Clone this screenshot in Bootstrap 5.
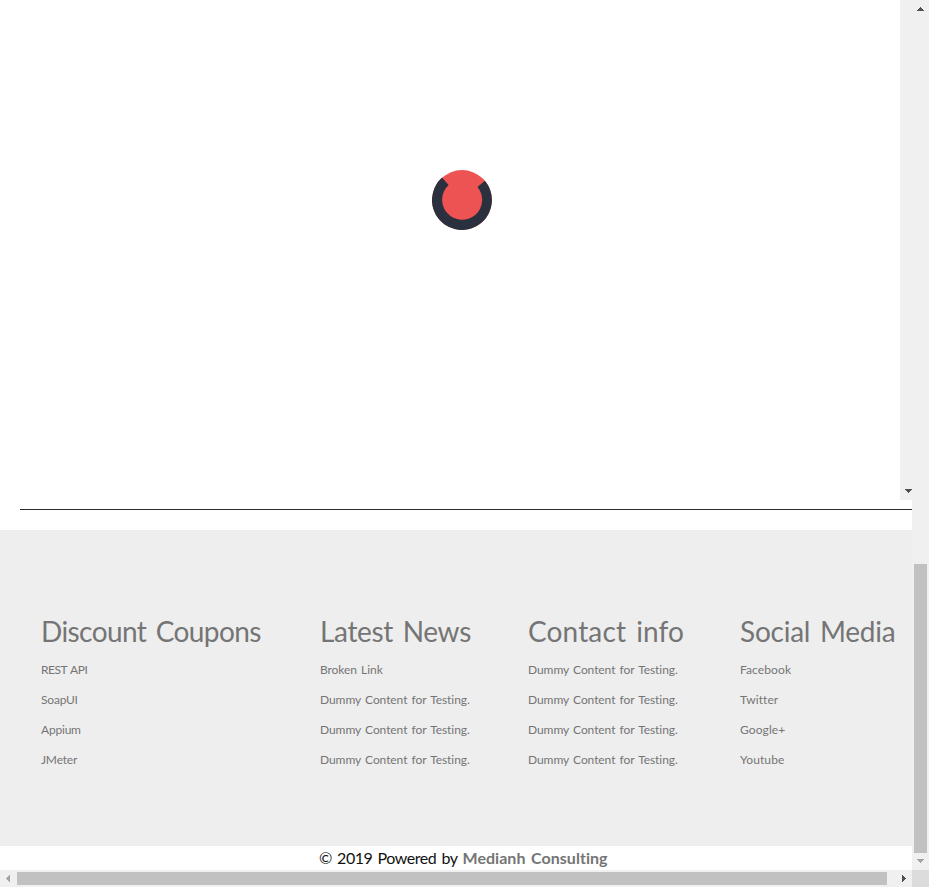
<!DOCTYPE html>
<html lang="en">
<head>
<meta charset="utf-8">
<title>Medianh Consulting</title>
<link href="https://cdn.jsdelivr.net/npm/bootstrap@5.3.0/dist/css/bootstrap.min.css" rel="stylesheet">
<style>
body{font-family:"Trebuchet MS",Lato,"Open Sans",sans-serif;width:929px;height:887px;color:#111;font-variant-ligatures:none;word-spacing:.1em}
.view{width:912px;height:870px}
.frame{height:500px}
.slide{padding:170px 0 0 432px}
.frame-bar{width:12px;background:#f0f0f0;padding:489px 0 0 5px}
.rule{margin:9px 0 0 20px;height:1px;background:#2b2e30}
.links{margin-top:20px;height:316px;background:#eee;padding:82px 0 0 41px;color:#757575}
.links h2{font-size:28px;line-height:38px;margin:0 0 5px;font-weight:400;white-space:nowrap;word-spacing:.1em}
.links li{font-size:12px;line-height:30px;white-space:nowrap;word-spacing:.1em;letter-spacing:-.07px}
.links a,.credit a{color:#757575}
.c1{width:279px}.c2{width:208px}.c3{width:212px}.c4{width:172px}
.c1 h2{letter-spacing:-.58px}.c2 h2{letter-spacing:-.33px}.c3 h2{letter-spacing:.14px}.c4 h2{letter-spacing:-.23px}
.c1 li{letter-spacing:-.2px}.c1 li:first-child{letter-spacing:-.5px}
.c4 li{letter-spacing:.1px}
.credit{height:24px;padding-left:319px;font-size:16px;line-height:23px;white-space:nowrap;word-spacing:.1em;letter-spacing:-.46px}
.credit a{letter-spacing:.04px}
.vbar{width:17px;background:#f0f0f0}
.vbar .thumb{width:13px;height:289px;margin:549px auto 0 2px;background:#c1c1c1}
.hbar{height:17px;background:#f0f0f0}
.hbar .thumb{width:870px;height:13px;background:#c1c1c1}
.corner{width:17px;height:17px;background:#dcdcdc}
svg{display:block;flex:none}
</style>
<script src="https://cdn.jsdelivr.net/npm/bootstrap@5.3.0/dist/js/bootstrap.bundle.min.js"></script>
</head>
<body class="overflow-hidden bg-white">
<div class="d-flex">
  <main class="view overflow-hidden">
    <div class="frame d-flex">
      <div class="slide flex-grow-1">
        <svg width="60" height="60" viewBox="0 0 60 60"><circle cx="30" cy="30" r="29.9" fill="#ed5353"/><path d="M10 7.6A30 30 0 1 0 52.9 10.7L45.5 17A20 20 0 1 1 16.6 15.1Z" fill="#2a303d"/></svg>
      </div>
      <div class="frame-bar"><svg width="7" height="4" shape-rendering="crispEdges"><path d="M0 0h7v1h-1v1h-1v1h-1v1h-1v-1h-1v-1h-1v-1h-1z" fill="#505050"/></svg></div>
    </div>
    <div class="rule"></div>
    <footer>
      <div class="links d-flex">
        <section class="c1"><h2>Discount Coupons</h2><ul class="list-unstyled mb-0"><li><a class="text-decoration-none" href="#">REST API</a></li><li><a class="text-decoration-none" href="#">SoapUI</a></li><li><a class="text-decoration-none" href="#">Appium</a></li><li><a class="text-decoration-none" href="#">JMeter</a></li></ul></section>
        <section class="c2"><h2>Latest News</h2><ul class="list-unstyled mb-0"><li><a class="text-decoration-none" href="#">Broken Link</a></li><li>Dummy Content for Testing.</li><li>Dummy Content for Testing.</li><li>Dummy Content for Testing.</li></ul></section>
        <section class="c3"><h2>Contact info</h2><ul class="list-unstyled mb-0"><li>Dummy Content for Testing.</li><li>Dummy Content for Testing.</li><li>Dummy Content for Testing.</li><li>Dummy Content for Testing.</li></ul></section>
        <section class="c4"><h2>Social Media</h2><ul class="list-unstyled mb-0"><li><a class="text-decoration-none" href="#">Facebook</a></li><li><a class="text-decoration-none" href="#">Twitter</a></li><li><a class="text-decoration-none" href="#">Google+</a></li><li><a class="text-decoration-none" href="#">Youtube</a></li></ul></section>
      </div>
      <div class="credit">© 2019 Powered by <a class="fw-bold text-decoration-none" href="#">Medianh Consulting</a></div>
    </footer>
  </main>
  <div class="vbar">
    <svg width="17" height="15" shape-rendering="crispEdges"><path d="M5 11v-1h1v-1h1v-1h1v-1h1v1h1v1h1v1h1v1z" fill="#505050"/></svg>
    <div class="thumb"></div>
    <svg width="17" height="17" shape-rendering="crispEdges"><path d="M5 6h7v1h-1v1h-1v1h-1v1h-1v-1h-1v-1h-1v-1h-1z" fill="#a3a3a3"/></svg>
  </div>
</div>
<div class="d-flex">
  <div class="hbar d-flex align-items-center">
    <svg width="17" height="17" shape-rendering="crispEdges"><path d="M10 5v7h-1v-1h-1v-1h-1v-1h-1v-1h1v-1h1v-1h1v-1z" fill="#a3a3a3"/></svg>
    <div class="thumb"></div>
    <svg width="25" height="17" shape-rendering="crispEdges"><path d="M15 5h1v1h1v1h1v1h1v1h-1v1h-1v1h-1v1h-1z" fill="#505050"/></svg>
  </div>
  <div class="corner"></div>
</div>
</body>
</html>
